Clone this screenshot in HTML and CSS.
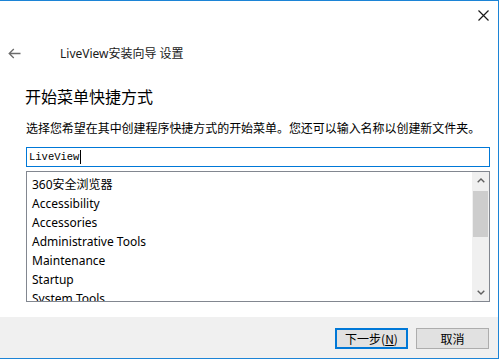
FILE: index.html
```html
<!DOCTYPE html>
<html lang="zh">
<head>
<meta charset="utf-8">
<title>LiveView安装向导 设置</title>
<link rel="stylesheet" href="styles.css">
</head>
<body>
<div class="window">
  <div class="titlebar">
    <div class="close">
      <svg width="11" height="11" viewBox="0 0 11 11"><path d="M0.5 0.5 L10.5 10.5 M10.5 0.5 L0.5 10.5" stroke="#1a1a1a" stroke-width="1.2" fill="none"/></svg>
    </div>
  </div>
  <div class="nav">
    <svg class="back" width="13" height="11" viewBox="0 0 13 11"><path d="M12.5 5.5 H1.2 M5.8 1 L1.2 5.5 L5.8 10" stroke="#6b6b6b" stroke-width="1.3" fill="none"/></svg>
    <span class="nav-title">LiveView安装向导 设置</span>
  </div>
  <div class="content">
    <h1 class="heading">开始菜单快捷方式</h1>
    <p class="desc">选择您希望在其中创建程序快捷方式的开始菜单。您还可以输入名称以创建新文件夹。</p>
    <div class="textbox"><span class="textbox-value">LiveView</span><span class="caret"></span></div>
    <div class="listbox">
      <ul class="items">
        <li>360安全浏览器</li>
        <li>Accessibility</li>
        <li>Accessories</li>
        <li>Administrative Tools</li>
        <li>Maintenance</li>
        <li>Startup</li>
        <li>System Tools</li>
      </ul>
      <div class="scrollbar">
        <div class="sb-arrow"><svg width="8" height="5" viewBox="0 0 8 5"><path d="M0.7 4.3 L4 1 L7.3 4.3" stroke="#606060" stroke-width="1.4" fill="none"/></svg></div>
        <div class="sb-track"><div class="sb-thumb"></div></div>
        <div class="sb-arrow"><svg width="8" height="5" viewBox="0 0 8 5"><path d="M0.7 0.7 L4 4 L7.3 0.7" stroke="#606060" stroke-width="1.4" fill="none"/></svg></div>
      </div>
    </div>
  </div>
  <div class="footer">
    <button class="btn btn-default">下一步(<u>N</u>)</button>
    <button class="btn">取消</button>
  </div>
</div>
</body>
</html>
```
FILE: styles.css
```css
html, body {
  margin: 0;
  padding: 0;
  background: #ffffff;
}
.window {
  width: 499px;
  height: 359px;
  box-sizing: border-box;
  border: 1px solid #1c84d6;
  border-left: none;
  background: #ffffff;
  display: flex;
  flex-direction: column;
  font-family: "Noto Sans", "Noto Sans CJK SC", sans-serif;
  color: #000;
}
.titlebar {
  height: 29px;
  display: flex;
  justify-content: flex-end;
}
.close {
  width: 30px;
  display: flex;
  align-items: center;
  justify-content: center;
}
.nav {
  height: 20px;
  margin-top: 13px;
  display: flex;
  align-items: center;
  padding-left: 8px;
}
.back {
  display: block;
}
.nav-title {
  margin-left: 39px;
  font-size: 12px;
  color: #1a1a1a;
  font-family: "Noto Sans", "Noto Sans CJK SC", sans-serif;
}
.content {
  padding-left: 26px;
}
.heading {
  margin: 22px 0 0 -1px;
  font-size: 16px;
  line-height: 22px;
  font-weight: 400;
  font-family: "Noto Sans CJK SC", sans-serif;
}
.desc {
  margin: 13px 0 0 0;
  font-size: 12px;
  line-height: 16px;
  font-family: "Noto Sans CJK SC", sans-serif;
  letter-spacing: -0.05px;
  white-space: nowrap;
  color: #000;
}
.textbox {
  margin-top: 11px;
  width: 464px;
  height: 20px;
  box-sizing: border-box;
  border: 1px solid #0078d7;
  display: flex;
  align-items: center;
  padding-left: 2px;
  font-family: "Liberation Mono", monospace;
  font-size: 10.5px;
  font-weight: 400;
  color: #000;
}
.caret {
  width: 1px;
  height: 14px;
  background: #000;
  margin-left: 1px;
}
.listbox {
  margin-top: 4px;
  width: 464px;
  height: 131px;
  box-sizing: border-box;
  border: 1px solid #828790;
  display: flex;
}
.items {
  flex: 1;
  margin: 0;
  padding: 3px 0 0 5px;
  list-style: none;
  overflow: hidden;
  font-size: 12px;
  line-height: 19px;
}
.items li {
  white-space: nowrap;
}
.scrollbar {
  width: 17px;
  background: #f0f0f0;
  display: flex;
  flex-direction: column;
}
.sb-arrow {
  height: 17px;
  display: flex;
  align-items: center;
  justify-content: center;
}
.sb-track {
  flex: 1;
}
.sb-thumb {
  margin: 2px 1px 0 1px;
  height: 46px;
  background: #cdcdcd;
}
.footer {
  margin-top: auto;
  height: 41px;
  background: #f0f0f0;
  display: flex;
  justify-content: flex-end;
  align-items: flex-start;
  gap: 8px;
  padding: 11px 9px 0 0;
  box-sizing: border-box;
}
.btn {
  width: 73px;
  height: 21px;
  box-sizing: border-box;
  border: 1px solid #adadad;
  background: #e1e1e1;
  font-family: "Noto Sans CJK SC", sans-serif;
  font-size: 12px;
  color: #000;
  padding: 0;
  margin: 0;
  line-height: 17px;
}
.btn-default {
  border: 2px solid #0078d7;
}
.btn u {
  text-decoration: underline;
}
```
